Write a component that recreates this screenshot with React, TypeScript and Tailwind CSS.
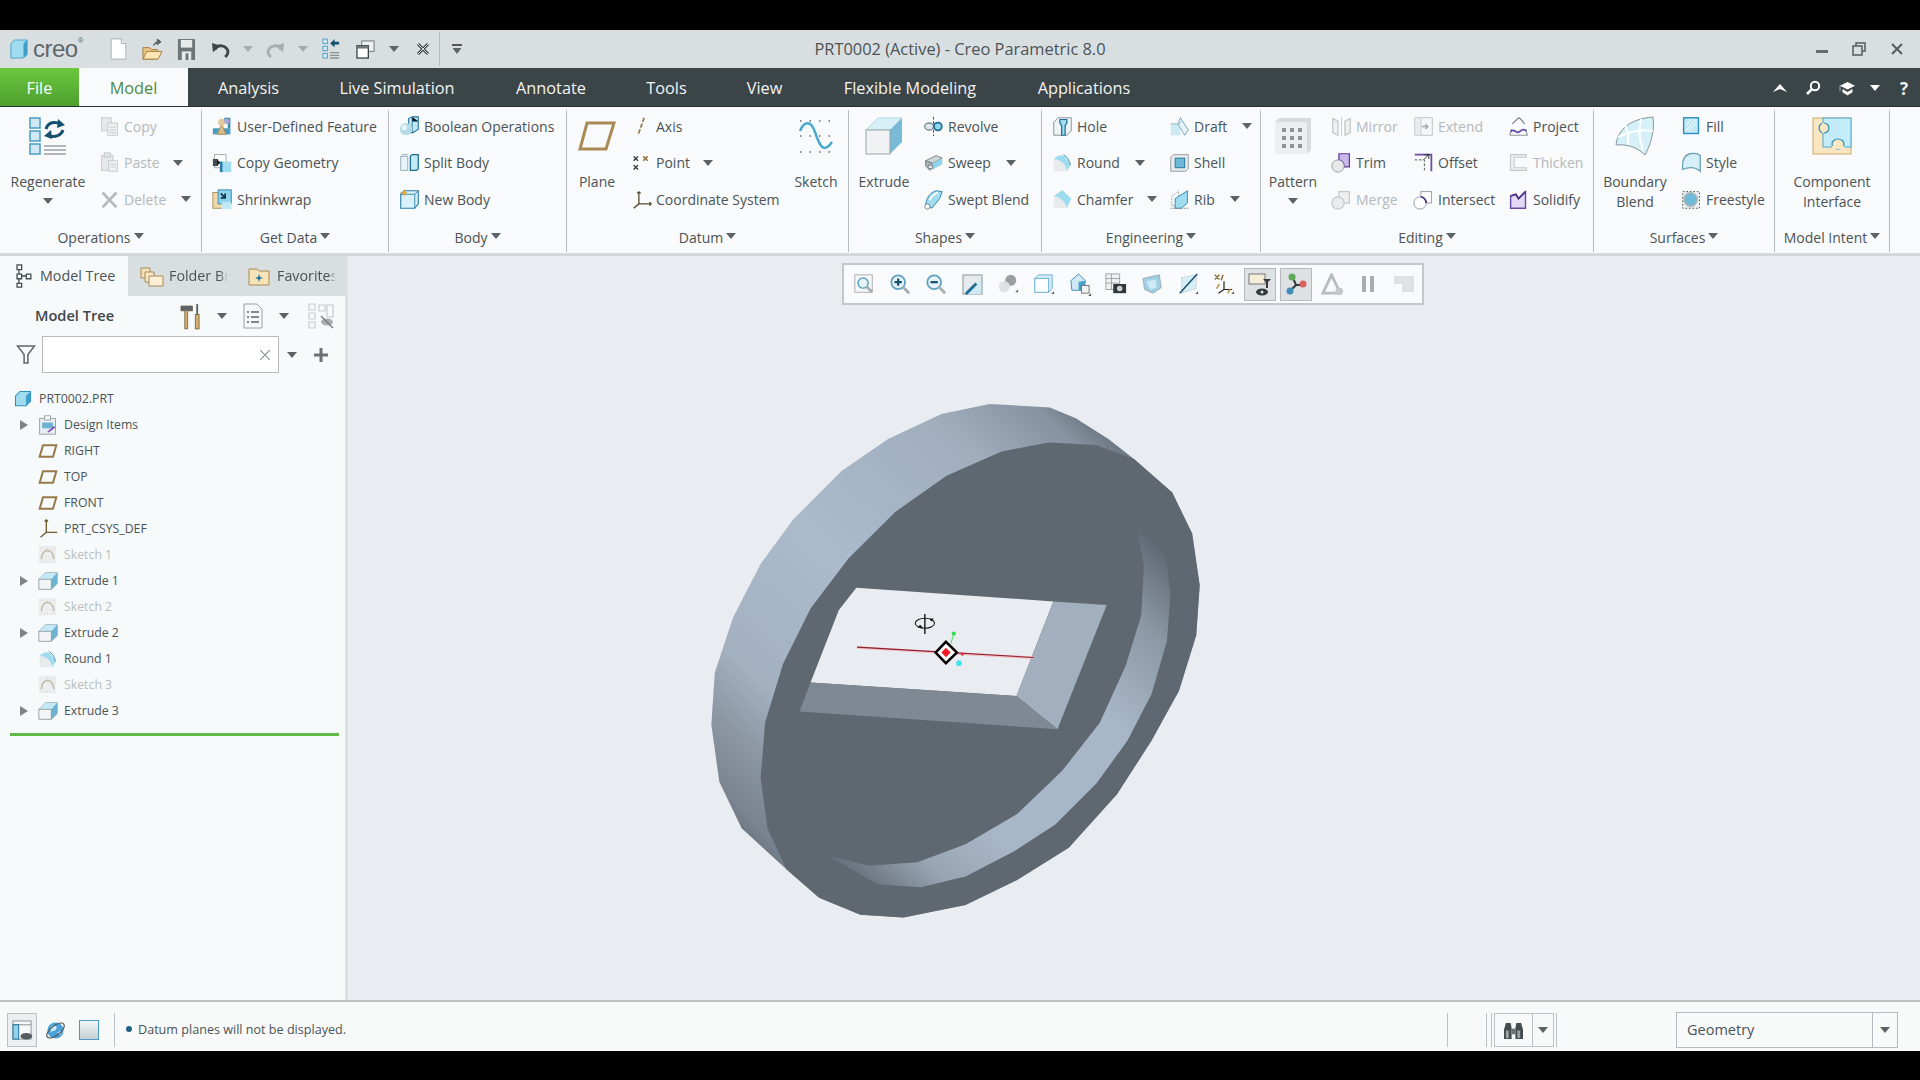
import type { ReactNode } from "react";

const BLUE = "#4a9cc4";
const PALE = "#cfeaf5";
const GOLD = "#97794a";
const OFF = "#c3c8ca";

const glyphs: Record<string, ReactNode> = {
  copy: (
    <>
      <rect x="3" y="2" width="11" height="15" fill="#e6e8e9" stroke={OFF} />
      <rect x="10" y="8" width="11" height="14" fill="#eef0f1" stroke={OFF} />
      <path d="M12 13h7M12 16h7M12 19h7" stroke={OFF} />
    </>
  ),
  paste: (
    <>
      <rect x="3" y="4" width="13" height="17" fill="#e6e8e9" stroke={OFF} />
      <rect x="6" y="1" width="7" height="5" fill="#dfe2e3" stroke={OFF} />
      <rect x="11" y="10" width="10" height="12" fill="#eef0f1" stroke={OFF} />
      <path d="M13 14h6M13 17h6" stroke={OFF} />
    </>
  ),
  del: <path d="M4 4l16 17M20 4L4 21" stroke="#b5babc" strokeWidth="3" />,
  udf: (
    <>
      <rect x="1" y="14" width="20" height="7" fill={BLUE} />
      <path d="M11 9l5 12H6z" fill="#d9b985" stroke="#a98a55" />
      <circle cx="11" cy="7" r="4" fill="#e2c79b" />
      <path d="M14 2h7v12h-3V5h-4z" fill="#3f8fb8" />
      <circle cx="17" cy="6" r="3" fill="#a9a6d8" />
    </>
  ),
  copygeo: (
    <>
      <rect x="3" y="3" width="13" height="15" fill="#fff" stroke="#9aa1a4" />
      <rect x="1" y="8" width="6" height="8" fill="#444b4f" />
      <rect x="9" y="11" width="13" height="12" fill="#9fdcf0" />
      <path d="M6 9l4 3-4 3z" fill="#111" />
      <path d="M9 11h3v12H9z" fill="#2b7fa8" />
    </>
  ),
  shrink: (
    <>
      <rect x="1" y="4" width="13" height="18" fill="#f0d9a8" stroke="#a98a55" />
      <rect x="7" y="1" width="15" height="16" fill="#8fd4ec" stroke="#2b7fa8" />
      <rect x="11" y="15" width="11" height="8" fill="#c3e9f6" />
      <path d="M10 5l5 5M15 5v5h-5" stroke="#17354a" strokeWidth="2" fill="none" />
    </>
  ),
  boolean: (
    <>
      <path d="M11 3l4-2h7v14l-6 4H11z" fill="#c3e6f3" stroke="#1f6f96" strokeWidth="1.2" />
      <path d="M15 1v5h7M15 6v13" stroke="#1f6f96" />
      <circle cx="8" cy="15" r="7" fill="#b5dbe9" />
      <circle cx="6" cy="13" r="3" fill="#e6f5fa" />
    </>
  ),
  split: (
    <>
      <path d="M2 5h8v16H2z" fill="#e7f5fa" stroke="#8fa5ae" />
      <path d="M2 5l2-2h6" fill="none" stroke="#8fa5ae" />
      <path d="M13 5l2-2h7v16l-2 2h-7z" fill="#c3e9f6" stroke="#1f6f96" strokeWidth="1.5" />
    </>
  ),
  newbody: (
    <>
      <path d="M2 6l4-4h16v15l-4 5H2z" fill="#d9f1f9" stroke="#2b7fa8" strokeWidth="1.3" />
      <path d="M2 6h16v16M18 6l4-4" fill="none" stroke="#2b7fa8" />
      <path d="M6 0l1 3 3 1-3 1-1 4-1-4-4-1 4-1z" fill="#e8a52c" />
    </>
  ),
  axis: <path d="M15 2L8 22" stroke={GOLD} strokeWidth="2" strokeDasharray="5 2" />,
  point: (
    <>
      <path d="M3 5l5 5M8 5l-5 5M3 15l5 5M8 15l-5 5" stroke="#333" strokeWidth="1.6" />
      <path d="M14 5l5 5M19 5l-5 5" stroke={GOLD} strokeWidth="2" />
    </>
  ),
  csys: (
    <path d="M9 3v14M9 17l-6 5M9 17h14M9 3l-2 2M9 3l2 2M21 15l2 2-2 2" stroke="#5b4a2b" strokeWidth="1.5" fill="none" />
  ),
  revolve: (
    <>
      <path d="M12 1v22" stroke="#333" strokeDasharray="3 2" />
      <ellipse cx="7" cy="12" rx="5" ry="4" fill="#dfe8ec" stroke="#7a8a91" strokeWidth="1.5" />
      <circle cx="17" cy="12" r="4.5" fill="#8fd4ec" stroke="#1f6f96" strokeWidth="2" />
    </>
  ),
  sweep: (
    <>
      <path d="M3 10l12-6 7 3-11 6z" fill="#cfd6d9" stroke="#6f7c82" />
      <path d="M3 10v6l5 5 3-8z" fill="#a9b4b9" stroke="#6f7c82" />
      <path d="M11 13l11-6v7l-11 6z" fill="#8fd4ec" />
      <path d="M6 15h5v4H6z" fill="#e2e7e9" stroke="#6f7c82" />
    </>
  ),
  swept: (
    <>
      <path d="M3 18c1-8 5-14 12-16l7 1-3 8-9 11z" fill="#9fdcf0" stroke="#2b7fa8" />
      <path d="M8 13c1-4 4-7 9-9" stroke="#fff" strokeWidth="2" fill="none" />
      <circle cx="5" cy="20" r="3" fill="#fff" stroke="#6f7c82" />
    </>
  ),
  hole: (
    <>
      <path d="M2 7l5-5h15v15l-5 5H2z" fill="#eef3f5" stroke="#7a8a91" />
      <path d="M9 4h8v4l-2 3v11H11V11L9 8z" fill="#9fdcf0" stroke="#1f6f96" strokeWidth="1.4" />
    </>
  ),
  round: (
    <>
      <path d="M2 8h11l8 7-4 7H2z" fill="#e7ebed" />
      <path d="M2 8c6-6 13-7 19 7l-4 7c-1-8-6-13-15-14z" fill="#9fdcf0" />
      <path d="M13 3c4 2 7 6 8 12" stroke="#2b7fa8" fill="none" />
    </>
  ),
  chamfer: (
    <>
      <path d="M2 8h9l7 9-1 5H2z" fill="#e7ebed" />
      <path d="M2 8l10-7 10 10-5 11c-1-6-7-13-15-14z" fill="#9fdcf0" />
    </>
  ),
  draft: (
    <>
      <path d="M2 9h11v13H2z" fill="#cde9f3" />
      <path d="M13 2l9 14-4 6-8-13z" fill="#e5f4fa" stroke="#6f9fb4" />
      <path d="M2 9h10l2-3" stroke="#8fb4c2" fill="none" />
    </>
  ),
  shell: (
    <>
      <path d="M2 6l3-3h17v16l-3 3H2z" fill="#e7ebed" stroke="#8a9599" />
      <rect x="7" y="7" width="11" height="11" fill="#6db9da" stroke="#1f6f96" />
    </>
  ),
  rib: (
    <>
      <path d="M3 9l8-7v17H3z" fill="none" stroke="#9aa1a4" strokeDasharray="2 1" />
      <path d="M7 11l14-9v14l-7 6H7z" fill="#9fdcf0" stroke="#2b7fa8" />
      <path d="M2 22h20" stroke="#7a8a91" strokeDasharray="2 1" />
    </>
  ),
  mirror: (
    <>
      <path d="M2 3l6 3v16l-6-3zM22 3l-6 3v16l6-3z" fill="#eef0f1" stroke={OFF} strokeWidth="1.5" />
      <path d="M12 1v22" stroke={OFF} />
    </>
  ),
  extend: (
    <>
      <rect x="2" y="2" width="20" height="20" fill="#e9ebec" stroke={OFF} />
      <rect x="9" y="2" width="13" height="20" fill="#f5f6f7" stroke={OFF} />
      <path d="M10 12h7M14 9l3 3-3 3" stroke="#a0a6a9" strokeWidth="1.5" fill="none" />
    </>
  ),
  project: (
    <>
      <path d="M2 22h20l-2-7M2 22l2-7" fill="none" stroke="#8a9599" strokeWidth="1.3" />
      <path d="M3 18c4-5 6 3 10 0s5-3 8-1" fill="none" stroke="#6a4aa8" strokeWidth="2" />
      <path d="M5 9l6-6c1-1 2-1 3 0l5 6" fill="none" stroke="#7d8a90" strokeWidth="1.6" />
    </>
  ),
  trim: (
    <>
      <path d="M9 2h12v15H15A8 8 0 0 0 9 9z" fill="#c9b8ec" stroke="#5a3d99" strokeWidth="1.4" />
      <circle cx="8" cy="16" r="7" fill="#e7e9ea" stroke="#8a9599" />
    </>
  ),
  offset: (
    <>
      <path d="M2 3h19v19" fill="none" stroke="#6a4aa8" strokeWidth="2" />
      <path d="M2 9h11v13" fill="none" stroke="#444" strokeDasharray="3 2" />
      <path d="M12 9l6-6M18 3v5M18 3h-5" stroke="#222" fill="none" />
    </>
  ),
  thicken: (
    <>
      <path d="M3 3h18v3H7v12h14v3H3z" fill="#f0f1f2" stroke={OFF} strokeWidth="1.2" />
    </>
  ),
  merge: (
    <>
      <rect x="9" y="3" width="12" height="13" fill="#eef0f1" stroke={OFF} strokeWidth="1.4" />
      <circle cx="8" cy="16" r="7" fill="#e9ebec" stroke={OFF} strokeWidth="1.4" />
    </>
  ),
  intersect: (
    <>
      <rect x="9" y="3" width="12" height="13" fill="#fff" stroke="#8a9599" />
      <circle cx="8" cy="16" r="7" fill="#fff" stroke="#8a9599" />
      <path d="M9 9a7 7 0 0 1 6 7" stroke="#4a2f85" strokeWidth="2" fill="none" />
    </>
  ),
  solidify: (
    <>
      <path d="M3 8l6-2 3 5 8-8v19H3z" fill="#e2daf4" stroke="#6a4aa8" strokeWidth="1.6" />
      <path d="M3 8l6-2 3 5 8-8" fill="none" stroke="#4a2f85" strokeWidth="2" />
    </>
  ),
  fill: (
    <>
      <rect x="3" y="2" width="17" height="18" fill="#bfe7f4" stroke="#2b8fc0" strokeWidth="1.6" />
      <path d="M5 17L17 4M8 18l10-11M5 12l7-8" stroke="#fff" />
    </>
  ),
  style: (
    <path d="M2 20c-1-9 1-16 8-18 5-1 10 0 12 2v18c-6-5-13-5-20-2z" fill="#d5f0f9" stroke="#6f9fb4" strokeWidth="1.5" />
  ),
  freestyle: (
    <>
      <rect x="2" y="3" width="19" height="19" fill="#eef3f5" stroke="#444" strokeDasharray="2 2" />
      <circle cx="11" cy="12" r="7.5" fill="#6dbcdc" stroke="#a9b4b9" strokeWidth="2" />
    </>
  ),
  cube: (
    <>
      <path d="M1 10l8-8h14v13l-7 7H1z" fill="#f2f4f5" stroke="#8a9599" />
      <path d="M9 2h14l-7 8H1z" fill="#c3e9f6" />
      <path d="M16 10l7-8v13l-7 7z" fill="#6db3d1" />
      <path d="M1 10h15v12" fill="none" stroke="#8a9599" />
    </>
  ),
  plane: <path d="M6 5h16l-4 14H2z" fill="none" stroke={GOLD} strokeWidth="2.4" />,
  csysTree: (
    <path d="M10 1v15M10 16l-7 6M10 16h13M8 3l2-2 2 2" stroke="#6f5a34" strokeWidth="1.6" fill="none" />
  ),
  sketchTree: (
    <>
      <rect x="1" y="1" width="21" height="21" fill="#eceeee" />
      <path d="M3 4h17M3 20h17" stroke="#c9cdcf" strokeDasharray="1 3" />
      <path d="M4 17c1-14 14-14 15 0" fill="none" stroke="#c0bca8" strokeWidth="2" />
    </>
  ),
  items: (
    <>
      <rect x="2" y="4" width="19" height="19" fill="#e8eef1" stroke="#8a9599" />
      <rect x="8" y="1" width="7" height="5" fill="#fff" stroke="#8a9599" />
      <rect x="5" y="9" width="13" height="7" fill="#6db3d1" />
      <path d="M11 20l8-7 2 2-8 6z" fill="#8a5bc4" />
    </>
  ),
  root: (
    <>
      <path d="M2 8l6-6h14v13l-6 6H2z" fill="#9fdcf0" stroke="#2b8fc0" strokeWidth="1.4" />
      <path d="M16 8l6-6v13l-6 6z" fill="#3f9fcb" />
    </>
  ),
};

function Ico({ name, size = 21 }: { name: string; size?: number }) {
  return (
    <svg viewBox="0 0 24 24" width={size} height={size} className="shrink-0">
      {glyphs[name]}
    </svg>
  );
}

function Caret({ className = "", dark = false }: { className?: string; dark?: boolean }) {
  return (
    <svg viewBox="0 0 10 6" width="10" height="6" className={"shrink-0 " + className}>
      <path d="M0 0h10L5 6z" fill={dark ? "#fff" : "#5c6366"} />
    </svg>
  );
}

function Small({
  icon,
  label,
  off = false,
  caret,
  slot = "w-[25px]",
}: {
  icon: string;
  label: string;
  off?: boolean;
  caret?: string;
  slot?: string;
}) {
  return (
    <div className={"flex h-[36.5px] items-center " + (off ? "text-[#b4b9bb]" : "text-[#4b5356]")}>
      <span className={"flex shrink-0 " + slot}>
        <Ico name={icon} />
      </span>
      <span className="whitespace-nowrap">{label}</span>
      {caret && <Caret className={caret} />}
    </div>
  );
}

function Col({ className = "", children }: { className?: string; children: ReactNode }) {
  return <div className={"-mt-[2px] flex shrink-0 flex-col " + className}>{children}</div>;
}

function Large({
  width,
  lines,
  caret = false,
  children,
}: {
  width: string;
  lines: string[];
  caret?: boolean;
  children: ReactNode;
}) {
  return (
    <div className={"flex shrink-0 flex-col items-center pt-[7px] leading-[20px] text-[#4b5356] " + width}>
      <div className="mb-[17px] flex h-[38px] items-center justify-center">{children}</div>
      {lines.map((l) => (
        <span key={l} className="whitespace-nowrap">
          {l}
        </span>
      ))}
      {caret && <Caret className="mt-[6px]" />}
    </div>
  );
}

function Group({ title, width, children }: { title: string; width: string; children: ReactNode }) {
  return (
    <section className={"flex h-[142px] shrink-0 flex-col border-r border-[#b5bdc0] " + width}>
      <div className="flex h-[115px]">{children}</div>
      <div className="flex h-[24px] items-center justify-center gap-[3px] text-[#4b5356]">
        <span>{title}</span>
        <Caret className="-mt-[2px]" />
      </div>
    </section>
  );
}

function RegenLarge() {
  return (
    <svg viewBox="0 0 38 38" width="38" height="38">
      {[1, 14, 27].map((y) => (
        <rect key={y} x="1" y={y} width="10" height="10" fill={PALE} stroke={BLUE} strokeWidth="1.5" />
      ))}
      <path d="M15 29h22M15 33h22M15 37h22" stroke="#9aa0a3" strokeWidth="1.6" />
      <path d="M17 12c2-7 9-8 15-5" fill="none" stroke="#14506e" strokeWidth="3" />
      <path d="M29 2l7 6-8 3z" fill="#14506e" />
      <path d="M34 13c-2 6-9 8-15 5" fill="none" stroke="#14506e" strokeWidth="3" />
      <path d="M22 13l-7 6 8 3z" fill="#14506e" />
    </svg>
  );
}

function ExtrudeLarge() {
  return (
    <svg viewBox="0 0 38 38" width="38" height="38">
      <path d="M1 13L13 1h24L25 13z" fill="#d7f0f8" stroke="#b5d4df" />
      <path d="M25 13L37 1v24L25 37z" fill="#79bad6" />
      <rect x="1" y="13" width="24" height="24" fill="#f1f2f3" stroke="#9aa1a4" />
    </svg>
  );
}

function SketchLarge() {
  return (
    <svg viewBox="0 0 36 38" width="36" height="38">
      <path d="M2 4h32M2 19h32M2 35h32" stroke="#667" strokeWidth="1.6" strokeDasharray="1.5 8" />
      <path d="M2 14C6 4 13 3 17 15s8 23 17 10" fill="none" stroke="#45a9d1" strokeWidth="2.4" />
    </svg>
  );
}

function PatternLarge() {
  return (
    <svg viewBox="0 0 38 38" width="38" height="38">
      <path d="M1 5l4-4h32v32l-4 4H1z" fill="#d8dbdd" />
      <rect x="1" y="5" width="32" height="32" fill="#eceeef" />
      {[11, 19, 27].map((y) =>
        [8, 16, 24].map((x) => <rect key={`${x}-${y}`} x={x} y={y} width="4" height="4" fill="#8f9598" />),
      )}
    </svg>
  );
}

function BlendLarge() {
  return (
    <svg viewBox="0 0 40 40" width="40" height="40">
      <path d="M1 29C3 13 15 3 38 1c2 12-2 27-8 38-8-8-18-11-29-10z" fill="#d5f0f9" stroke="#8a9599" />
      <path d="M10 9c3 6 4 12 3 20M26 3c-2 9-3 19 2 31M3 21c9-5 23-8 35-6" fill="none" stroke="#fff" strokeWidth="2" />
    </svg>
  );
}

function InterfaceLarge() {
  return (
    <svg viewBox="0 0 40 38" width="40" height="38">
      <rect x="1" y="1" width="38" height="36" fill="#fae6c0" stroke="#c9a96b" />
      <rect x="11" y="1" width="28" height="29" fill="#c3ecf8" stroke="#4fa8cf" />
      <circle cx="12" cy="11" r="5" fill="#fae6c0" stroke="#2b8fc0" strokeWidth="1.2" />
      <ellipse cx="26" cy="27" rx="6" ry="5" fill="#fae6c0" stroke="#2b8fc0" strokeWidth="1.2" />
      <path d="M10 6h2v10h-2zM20 29h12v3H20z" fill="#fae6c0" />
    </svg>
  );
}

function PlaneLarge() {
  return (
    <svg viewBox="0 0 38 30" width="38" height="30">
      <path d="M9 2h27l-8 26H2z" fill="none" stroke="#a98a55" strokeWidth="3" />
    </svg>
  );
}

const tabs = [
  { label: "Analysis", width: "w-[121px]" },
  { label: "Live Simulation", width: "w-[176px]" },
  { label: "Annotate", width: "w-[132px]" },
  { label: "Tools", width: "w-[99px]" },
  { label: "View", width: "w-[97px]" },
  { label: "Flexible Modeling", width: "w-[194px]" },
  { label: "Applications", width: "w-[154px]" },
];

const tree = [
  { icon: "items", label: "Design Items", open: true },
  { icon: "plane", label: "RIGHT" },
  { icon: "plane", label: "TOP" },
  { icon: "plane", label: "FRONT" },
  { icon: "csysTree", label: "PRT_CSYS_DEF" },
  { icon: "sketchTree", label: "Sketch 1", off: true },
  { icon: "cube", label: "Extrude 1", open: true },
  { icon: "sketchTree", label: "Sketch 2", off: true },
  { icon: "cube", label: "Extrude 2", open: true },
  { icon: "round", label: "Round 1" },
  { icon: "sketchTree", label: "Sketch 3", off: true },
  { icon: "cube", label: "Extrude 3", open: true },
];

function TitleBar() {
  return (
    <header className="relative flex h-[38px] shrink-0 items-center bg-[#d9dfe1]">
      <svg viewBox="0 0 20 22" width="18" height="20" className="ml-[10px]">
        <path d="M1 5l4-4h14v16l-4 4H1z" fill="#9fdcf0" stroke="#3f9fcb" />
        <path d="M15 5l4-4v16l-4 4z" fill="#3f9fcb" />
      </svg>
      <span className="ml-[5px] w-[58px] font-['Liberation_Sans',sans-serif] text-[24px] leading-none tracking-[-0.5px] text-[#5f6669]">
        creo<span className="align-top text-[8px]">®</span>
      </span>
      <div className="ml-[19px] flex items-center">
        <svg viewBox="0 0 18 24" width="17" height="22">
          <path d="M1 1h11l5 5v17H1z" fill="#fff" stroke="#a6acaf" />
          <path d="M12 1v5h5" fill="#e8eaeb" stroke="#a6acaf" />
        </svg>
        <svg viewBox="0 0 22 22" width="21" height="21" className="ml-[15px]">
          <path d="M1 9h7l2 2h6v10H1z" fill="#e6c283" stroke="#a87f3c" />
          <path d="M5 13h16l-4 8H1z" fill="#fbe6b4" stroke="#a87f3c" />
          <path d="M12 7c1-3 3-4 6-4M16 0l4 3-4 3z" fill="#55605f" stroke="#55605f" />
        </svg>
        <svg viewBox="0 0 20 24" width="19" height="23" className="ml-[14px]">
          <path d="M1 1h18v22H1z" fill="#6c7578" />
          <rect x="4" y="2" width="12" height="8" fill="#e7eaeb" />
          <rect x="5" y="14" width="10" height="9" fill="#e7eaeb" />
          <rect x="9" y="16" width="3" height="7" fill="#6c7578" />
        </svg>
        <svg viewBox="0 0 20 18" width="19" height="17" className="ml-[15px]">
          <path d="M4 9c3-6 12-5 14 2 0 2-1 4-3 6" fill="none" stroke="#3e4648" strokeWidth="3" />
          <path d="M1 2l9 3-8 7z" fill="#3e4648" />
        </svg>
        <Caret className="ml-[13px] opacity-40" />
        <svg viewBox="0 0 20 18" width="19" height="17" className="ml-[13px]">
          <path d="M16 9C13 3 4 4 2 11c0 2 1 4 3 6" fill="none" stroke="#a7adb0" strokeWidth="3" />
          <path d="M19 2l-9 3 8 7z" fill="#a7adb0" />
        </svg>
        <Caret className="ml-[13px] opacity-40" />
        <svg viewBox="0 0 20 24" width="18" height="22" className="ml-[14px]">
          {[1, 9, 17].map((y) => (
            <rect key={y} x="1" y={y} width="5" height="5" fill={PALE} stroke={BLUE} />
          ))}
          <path d="M9 16h10M9 19h10M9 22h10" stroke="#8a9194" strokeWidth="1.4" />
          <path d="M9 6l5-5v3h5v3h-5v3z" fill="#14506e" />
        </svg>
        <svg viewBox="0 0 20 20" width="19" height="19" className="ml-[16px]">
          <rect x="6" y="1" width="13" height="11" fill="#eef0f1" stroke="#6f7679" />
          <rect x="1" y="6" width="12" height="13" fill="#fff" stroke="#3e4648" strokeWidth="1.4" />
          <rect x="1" y="6" width="12" height="3" fill="#6f7679" />
        </svg>
        <Caret className="ml-[14px]" />
        <svg viewBox="0 0 16 16" width="16" height="16" className="ml-[16px]">
          <path d="M3 3l10 10M13 3L3 13" stroke="#3e4648" strokeWidth="3" />
          <path d="M3 3l10 10M13 3L3 13" stroke="#d9dfe1" strokeWidth="1" />
        </svg>
        <span className="ml-[8px] h-[34px] w-px bg-[#b5bcbf]" />
        <span className="ml-[12px] flex flex-col items-center gap-[2px]">
          <span className="h-[2px] w-[10px] bg-[#555]" />
          <Caret className="scale-x-90" />
        </span>
      </div>
      <h1 className="absolute left-0 right-0 text-center text-[16.4px] font-normal leading-none text-[#4b5356]">
        PRT0002 (Active) - Creo Parametric 8.0
      </h1>
      <div className="ml-auto mr-[16px] flex items-center gap-[24px]">
        <span className="mt-[5px] h-[2.5px] w-[12px] bg-[#666c6f]" />
        <svg viewBox="0 0 14 14" width="14" height="14">
          <rect x="1" y="4" width="9" height="9" fill="none" stroke="#555b5e" strokeWidth="1.5" />
          <path d="M4 4V1h9v8h-3" fill="none" stroke="#555b5e" strokeWidth="1.5" />
        </svg>
        <svg viewBox="0 0 14 14" width="14" height="14">
          <path d="M2 2l10 10M12 2L2 12" stroke="#555b5e" strokeWidth="2" />
        </svg>
      </div>
    </header>
  );
}

function TabBar() {
  return (
    <nav className="flex h-[39px] shrink-0 items-stretch border-b border-[#2a3133] bg-[#3b4447] pt-[2px] text-[16.3px] text-[#f2f4f4]">
      <div className="-mt-[2px] flex w-[79px] items-center justify-center bg-gradient-to-b from-[#6cc83f] to-[#4d9f2e] pt-[2px] text-white">
        File
      </div>
      <div className="-mt-[2px] flex w-[109px] items-center justify-center bg-[#f8fafb] pt-[2px] text-[#4f8a42]">
        Model
      </div>
      {tabs.map((t) => (
        <div key={t.label} className={"flex items-center justify-center whitespace-nowrap " + t.width}>
          {t.label}
        </div>
      ))}
      <div className="ml-auto mr-[12px] flex items-center">
        <svg viewBox="0 0 14 9" width="14" height="9">
          <path d="M7 0l7 8-7-3-7 3z" fill="#fff" />
        </svg>
        <svg viewBox="0 0 16 16" width="16" height="16" className="ml-[18px]">
          <circle cx="10" cy="6" r="4.2" fill="none" stroke="#fff" strokeWidth="2" />
          <path d="M7 9l-5 5" stroke="#fff" strokeWidth="2.5" />
        </svg>
        <svg viewBox="0 0 18 16" width="17" height="15" className="ml-[18px]">
          <path d="M9 1l8 4-8 4-8-4z" fill="#fff" />
          <path d="M4 9l5 3 5-3v3l-5 3-5-3zM1 5v6" fill="#fff" stroke="#fff" strokeWidth="0.6" />
        </svg>
        <Caret dark className="ml-[14px]" />
        <span className="ml-[20px] text-[17px] font-bold leading-none">?</span>
      </div>
    </nav>
  );
}

function Ribbon() {
  return (
    <div className="flex h-[146px] shrink-0 bg-[#f8fafb] pt-[3px] text-[14px]">
      <Group title="Operations" width="w-[202px]">
        <Large width="w-[96px]" lines={["Regenerate"]} caret>
          <RegenLarge />
        </Large>
        <Col className="ml-[3px]">
          <Small icon="copy" label="Copy" off />
          <Small icon="paste" label="Paste" off caret="ml-[13px]" />
          <Small icon="del" label="Delete" off caret="ml-[15px]" />
        </Col>
      </Group>
      <Group title="Get Data" width="w-[187px]">
        <Col className="ml-[10px]">
          <Small icon="udf" label="User-Defined Feature" />
          <Small icon="copygeo" label="Copy Geometry" />
          <Small icon="shrink" label="Shrinkwrap" />
        </Col>
      </Group>
      <Group title="Body" width="w-[178px]">
        <Col className="ml-[10px]">
          <Small icon="boolean" label="Boolean Operations" />
          <Small icon="split" label="Split Body" />
          <Small icon="newbody" label="New Body" />
        </Col>
      </Group>
      <Group title="Datum" width="w-[282px]">
        <Large width="w-[60px]" lines={["Plane"]}>
          <PlaneLarge />
        </Large>
        <Col className="ml-[4px] w-[155px]">
          <Small icon="axis" label="Axis" />
          <Small icon="point" label="Point" caret="ml-[13px]" />
          <Small icon="csys" label="Coordinate System" />
        </Col>
        <Large width="w-[60px]" lines={["Sketch"]}>
          <SketchLarge />
        </Large>
      </Group>
      <Group title="Shapes" width="w-[193px]">
        <Large width="w-[70px]" lines={["Extrude"]}>
          <ExtrudeLarge />
        </Large>
        <Col className="ml-[4px]">
          <Small icon="revolve" label="Revolve" />
          <Small icon="sweep" label="Sweep" caret="ml-[15px]" />
          <Small icon="swept" label="Swept Blend" />
        </Col>
      </Group>
      <Group title="Engineering" width="w-[219px]">
        <Col className="ml-[10px] w-[117px]">
          <Small icon="hole" label="Hole" />
          <Small icon="round" label="Round" caret="ml-[15px]" />
          <Small icon="chamfer" label="Chamfer" caret="ml-[14px]" />
        </Col>
        <Col>
          <Small icon="draft" label="Draft" caret="ml-[15px]" />
          <Small icon="shell" label="Shell" />
          <Small icon="rib" label="Rib" caret="ml-[15px]" />
        </Col>
      </Group>
      <Group title="Editing" width="w-[333px]">
        <Large width="w-[64px]" lines={["Pattern"]} caret>
          <PatternLarge />
        </Large>
        <Col className="ml-[6px] w-[82px]">
          <Small icon="mirror" label="Mirror" off />
          <Small icon="trim" label="Trim" />
          <Small icon="merge" label="Merge" off />
        </Col>
        <Col className="w-[95px]">
          <Small icon="extend" label="Extend" off />
          <Small icon="offset" label="Offset" />
          <Small icon="intersect" label="Intersect" />
        </Col>
        <Col>
          <Small icon="project" label="Project" />
          <Small icon="thicken" label="Thicken" off />
          <Small icon="solidify" label="Solidify" />
        </Col>
      </Group>
      <Group title="Surfaces" width="w-[181px]">
        <Large width="w-[82px]" lines={["Boundary", "Blend"]}>
          <BlendLarge />
        </Large>
        <Col className="ml-[5px]">
          <Small icon="fill" label="Fill" />
          <Small icon="style" label="Style" />
          <Small icon="freestyle" label="Freestyle" />
        </Col>
      </Group>
      <Group title="Model Intent" width="w-[115px]">
        <Large width="w-[114px]" lines={["Component", "Interface"]}>
          <InterfaceLarge />
        </Large>
      </Group>
    </div>
  );
}

function ModelTree() {
  return (
    <aside className="flex w-[348px] shrink-0 border-r-[3px] border-[#dcdfe3] bg-[#f7fafb] text-[#4b5356]">
      <div className="flex w-full flex-col">
        <div className="flex h-[40px] shrink-0 text-[14.3px]">
          <div className="flex w-[128px] items-center pl-[15px]">
            <svg viewBox="0 0 18 26" width="17" height="24">
              <path d="M2 1h5v5H2zM2 11h5v5H2zM2 21h5v4H2zM12 11h5v5h-5zM7 13h5M4 6v5M4 16v5" fill="none" stroke="#444b4e" strokeWidth="1.4" />
            </svg>
            <span className="ml-[8px]">Model Tree</span>
          </div>
          <div className="flex flex-1 items-center bg-[#d9dfe1]">
            <svg viewBox="0 0 24 22" width="24" height="22" className="ml-[12px]">
              <path d="M1 3h9v10H1z" fill="#f3e0b6" stroke="#a98a55" />
              <path d="M5 7h9v10H5z" fill="#f6e6c3" stroke="#a98a55" />
              <path d="M9 11h14v10H9z" fill="#fbefd4" stroke="#a98a55" />
            </svg>
            <span className="ml-[5px] w-[59px] overflow-hidden whitespace-nowrap [mask-image:linear-gradient(to_right,black_85%,transparent)]">
              Folder Browser
            </span>
            <svg viewBox="0 0 22 20" width="22" height="20" className="ml-[20px]">
              <path d="M1 3h8l2 2h10v14H1z" fill="#f6e3b8" stroke="#a98a55" />
              <path d="M11 8l1 3 3 1-3 1-1 3-1-3-3-1 3-1z" fill="#1f6f96" />
            </svg>
            <span className="ml-[7px] w-[59px] overflow-hidden whitespace-nowrap [mask-image:linear-gradient(to_right,black_88%,transparent)]">
              Favorites
            </span>
          </div>
        </div>
        <div className="flex h-[40px] shrink-0 items-center pl-[35px]">
          <span className="w-[145px] text-[14.6px] font-semibold text-[#3f4649]">Model Tree</span>
          <svg viewBox="0 0 22 28" width="21" height="27">
            <path d="M1 3h12v5H8v19H5V8H1z" fill="#d8b06a" stroke="#6a5a3a" strokeWidth="0.8" />
            <path d="M1 3h12v5H1z" fill="#5c6366" />
            <rect x="16" y="12" width="4" height="15" fill="#d8b06a" stroke="#6a5a3a" strokeWidth="0.8" />
            <path d="M18 1v11" stroke="#5c6366" strokeWidth="2" />
          </svg>
          <Caret className="ml-[16px]" />
          <svg viewBox="0 0 20 26" width="20" height="26" className="ml-[16px]">
            <path d="M1 1h13l5 5v19H1z" fill="#f5f7f8" stroke="#9aa1a4" />
            <path d="M4 9h2M8 9h8M4 14h2M8 14h8M4 19h2M8 19h8" stroke="#5c6366" strokeWidth="1.4" />
          </svg>
          <Caret className="ml-[16px]" />
          <svg viewBox="0 0 26 26" width="26" height="26" className="ml-[19px]">
            <path d="M1 1h6v6H1zM1 10h6v6H1zM1 19h6v6H1zM11 2h6v6h-6zM19 2h6v12h-6z" fill="none" stroke="#c8cccf" strokeWidth="1.2" />
            <ellipse cx="19" cy="19" rx="6" ry="3.5" fill="#a8aeb1" />
            <path d="M13 13l12 12" stroke="#7a8083" strokeWidth="1.5" />
          </svg>
        </div>
        <div className="flex h-[37px] shrink-0 items-center pl-[16px]">
          <svg viewBox="0 0 20 20" width="20" height="19">
            <path d="M1 1h18l-7 9v9h-4v-9z" fill="none" stroke="#5f6669" strokeWidth="1.6" />
          </svg>
          <div className="ml-[6px] flex h-[37px] w-[237px] items-center justify-end border border-[#b4babd] bg-white pr-[8px]">
            <svg viewBox="0 0 10 10" width="10" height="10">
              <path d="M0 0l10 10M10 0L0 10" stroke="#8d9396" strokeWidth="1.2" />
            </svg>
          </div>
          <Caret className="ml-[8px]" />
          <svg viewBox="0 0 14 14" width="14" height="14" className="ml-[17px]">
            <path d="M7 0v14M0 7h14" stroke="#6a7073" strokeWidth="3" />
          </svg>
        </div>
        <div className="mt-[13px] flex h-[26px] shrink-0 items-center pl-[14px] text-[12.3px]">
          <Ico name="root" size={18} />
          <span className="ml-[7px]">PRT0002.PRT</span>
        </div>
        {tree.map((row) => (
          <div key={row.label} className={"flex h-[26px] shrink-0 items-center text-[12.3px] " + (row.off ? "text-[#b9bdbf]" : "")}>
            <span className="flex w-[38px] justify-end pr-[10px]">
              {row.open && (
                <svg viewBox="0 0 8 10" width="8" height="10">
                  <path d="M0 0l8 5-8 5z" fill="#7d8386" />
                </svg>
              )}
            </span>
            <Ico name={row.icon} size={20} />
            <span className="ml-[6px] whitespace-nowrap">{row.label}</span>
          </div>
        ))}
        <div className="ml-[10px] mt-[9px] h-[3px] w-[329px] bg-[#62b947]" />
      </div>
    </aside>
  );
}

function ViewTool({ active = false, children }: { active?: boolean; children: ReactNode }) {
  return (
    <span
      className={
        "flex h-[33px] shrink-0 items-center justify-center " +
        (active ? "mx-[2px] w-[32px] border border-[#b4babd] bg-[#dde1e4]" : "w-[36px]")
      }
    >
      {children}
    </span>
  );
}

function ViewBar() {
  const lens = (sign: string) => (
    <svg viewBox="0 0 24 24" width="22" height="22">
      <circle cx="10" cy="10" r="7.5" fill="#e7f4f9" stroke="#5fa3c3" strokeWidth="2" />
      <path d="M15 15l7 7" stroke="#a6adb0" strokeWidth="3" />
      <path d={sign} stroke="#14506e" strokeWidth="2.4" />
    </svg>
  );
  return (
    <div className="mt-[6px] flex h-[42px] w-[582px] items-center border-2 border-[#c2c7c9] bg-[#f8fafb] pl-[2px]">
      <ViewTool>
        <svg viewBox="0 0 24 24" width="22" height="22">
          <rect x="2" y="2" width="19" height="19" fill="#f5f7f8" stroke="#a6adb0" />
          <circle cx="11" cy="11" r="5.5" fill="#e7f4f9" stroke="#5fa3c3" strokeWidth="1.6" />
          <path d="M15 15l6 6" stroke="#a6adb0" strokeWidth="3" />
        </svg>
      </ViewTool>
      <ViewTool>{lens("M6 10h8M10 6v8")}</ViewTool>
      <ViewTool>{lens("M6 10h8")}</ViewTool>
      <ViewTool>
        <svg viewBox="0 0 22 22" width="21" height="21">
          <rect x="1" y="1" width="20" height="20" fill="#e3e9ec" stroke="#8a9599" />
          <path d="M3 21L20 5v16z" fill="#cfeaf5" />
          <path d="M4 21L15 10" stroke="#1f6f96" strokeWidth="3" />
        </svg>
      </ViewTool>
      <ViewTool>
        <svg viewBox="0 0 24 24" width="22" height="22">
          <circle cx="15" cy="8" r="6" fill="#9a9fa2" />
          <circle cx="8" cy="15" r="6" fill="#dfe2e3" />
          <path d="M20 21l3-3v3z" fill="#555" />
        </svg>
      </ViewTool>
      <ViewTool>
        <svg viewBox="0 0 24 24" width="22" height="22">
          <path d="M2 6l4-4h15v15l-4 4H2z" fill="#cfeaf5" stroke="#6db3d1" />
          <rect x="2" y="6" width="15" height="15" fill="#fff" stroke="#6db3d1" />
          <path d="M20 23l3-3v3z" fill="#555" />
        </svg>
      </ViewTool>
      <ViewTool>
        <svg viewBox="0 0 24 24" width="23" height="23">
          <path d="M2 8l8-7 7 7-1 10H3z" fill="#cfeaf5" stroke="#3f8fb8" />
          <path d="M10 1v8l7-1-1 10h-6z" fill="#4aa0c9" />
          <rect x="13" y="13" width="8" height="8" fill="#f0f1f2" stroke="#777" />
          <path d="M20 24l3-3v3z" fill="#555" />
        </svg>
      </ViewTool>
      <ViewTool>
        <svg viewBox="0 0 24 24" width="22" height="22">
          <rect x="1" y="1" width="15" height="17" fill="#f1f2f3" stroke="#9aa1a4" />
          <path d="M1 6h15M1 11h15M7 1v17" stroke="#9aa1a4" />
          <rect x="9" y="12" width="14" height="10" fill="#30383b" />
          <circle cx="16" cy="17" r="3" fill="#cdd3d5" />
        </svg>
      </ViewTool>
      <ViewTool>
        <svg viewBox="0 0 24 24" width="22" height="22">
          <path d="M2 6l18-4 2 14-9 6-9-4z" fill="#9fd0e6" stroke="#9aa9b0" />
          <path d="M6 9l10-2 1 9-7 2z" fill="#cfeaf5" />
        </svg>
      </ViewTool>
      <ViewTool>
        <svg viewBox="0 0 24 24" width="22" height="22">
          <path d="M5 5l16-3v15l-16 5z" fill="#d7edf5" stroke="#c3cdd2" strokeDasharray="2 1" />
          <path d="M3 22L22 1" stroke="#14506e" strokeWidth="1.6" />
          <path d="M20 23l3-3v3z" fill="#555" />
        </svg>
      </ViewTool>
      <ViewTool>
        <svg viewBox="0 0 24 24" width="22" height="22">
          <path d="M2 2l5 5M7 2L2 7M11 2l-2 6" stroke="#8a6d3b" strokeWidth="1.6" />
          <path d="M12 9v9M12 18l-6 4M12 18h9" stroke="#222" strokeWidth="1.3" />
          <path d="M7 12l-3 5M16 22l3-5" stroke="#b59350" strokeWidth="1.6" />
          <path d="M20 23l3-3v3z" fill="#555" />
        </svg>
      </ViewTool>
      <ViewTool active>
        <svg viewBox="0 0 26 26" width="26" height="26">
          <rect x="2" y="3" width="16" height="10" fill="#f7eed9" stroke="#777" />
          <path d="M16 8h8l-3 3v6h-2v-6z" fill="#333b3e" />
          <ellipse cx="15" cy="21" rx="6" ry="3.5" fill="#333b3e" />
          <circle cx="15" cy="21" r="1.5" fill="#dde1e4" />
        </svg>
      </ViewTool>
      <ViewTool active>
        <svg viewBox="0 0 24 24" width="24" height="24">
          <path d="M9 6l3 7 8 0M12 13l-6 6" stroke="#30383b" strokeWidth="2" fill="none" />
          <circle cx="8" cy="5" r="3.5" fill="#62a95c" />
          <circle cx="19" cy="12" r="3.5" fill="#d9605b" />
          <circle cx="6" cy="19" r="3.5" fill="#3f8fb8" />
        </svg>
      </ViewTool>
      <ViewTool>
        <svg viewBox="0 0 24 24" width="23" height="23">
          <path d="M11 2L2 21h18z" fill="none" stroke="#b8bdbf" strokeWidth="3" />
          <circle cx="19" cy="19" r="4" fill="#c3c8ca" />
        </svg>
      </ViewTool>
      <ViewTool>
        <span className="h-[16px] w-[12px] border-x-[4px] border-[#a9aeb1]" />
      </ViewTool>
      <ViewTool>
        <svg viewBox="0 0 22 18" width="22" height="18">
          <path d="M1 1h20v16H9v-8H1z" fill="#dfe2e3" />
        </svg>
      </ViewTool>
    </div>
  );
}

function Part() {
  return (
    <svg
      viewBox="0 0 1568 1568"
      preserveAspectRatio="none"
      className="absolute left-[342px] top-[124px] h-[560px] w-[540px]"
    >
      <defs>
        <linearGradient id="wall" gradientUnits="userSpaceOnUse" x1="1290" y1="200" x2="200" y2="1400">
          <stop offset="0" stopColor="#66717d" />
          <stop offset="0.06" stopColor="#86929f" />
          <stop offset="0.2" stopColor="#a0aebe" />
          <stop offset="0.5" stopColor="#abbbcc" />
          <stop offset="0.74" stopColor="#a3b1c1" />
          <stop offset="0.84" stopColor="#8c97a3" />
          <stop offset="0.93" stopColor="#7a8490" />
          <stop offset="1" stopColor="#5f6771" />
        </linearGradient>
        <linearGradient id="recess" gradientUnits="userSpaceOnUse" x1="1300" y1="400" x2="420" y2="1380">
          <stop offset="0" stopColor="#5f6771" />
          <stop offset="0.15" stopColor="#8b98a4" />
          <stop offset="0.35" stopColor="#a8b7c8" />
          <stop offset="0.7" stopColor="#a8b7c8" />
          <stop offset="0.85" stopColor="#97a4b2" />
          <stop offset="1" stopColor="#5f6771" />
        </linearGradient>
      </defs>
      <polygon
        fill="url(#wall)"
        points="870,67 1045,77 1120,107 1215,165 1290,222 1400,315 1458,430 1480,575 1470,715 1420,870 1340,1010 1240,1160 1100,1310 950,1400 800,1470 620,1505 495,1497 375,1450 280,1370 150,1255 85,1125 62,965 72,820 125,665 205,515 300,390 440,255 575,165 730,95"
      />
      <polygon
        fill="#5f6771"
        points="1040,175 1180,182 1290,222 1400,315 1458,430 1480,575 1470,715 1420,870 1340,1010 1240,1160 1100,1310 950,1400 800,1470 620,1505 495,1497 375,1450 280,1370 225,1255 205,1115 218,960 270,795 350,640 460,500 595,370 745,268 905,200"
      />
      <polygon
        fill="url(#recess)"
        points="1245,315 1290,380 1318,520 1310,660 1265,800 1190,960 1080,1095 950,1215 800,1300 660,1350 520,1360 400,1332 545,1412 670,1420 800,1390 940,1320 1060,1245 1180,1130 1270,1010 1340,880 1385,730 1395,600 1380,480 1335,395"
      />
      <polygon fill="#e9ecf0" points="483,582 1055,620 948,885 350,847 432,645" />
      <polygon fill="#a2afbe" points="1055,620 1210,630 1067,978 948,885" />
      <polygon fill="#7e8994" points="350,847 948,885 1067,978 318,928" />
      <path d="M485 749L998 778" stroke="#f2b9bf" strokeWidth="7" />
      <path d="M485 748L998 777" stroke="#8a1c2a" strokeWidth="3" />
      <path d="M757 738L766 710" stroke="#58e05a" strokeWidth="3" />
      <circle cx="766" cy="710" r="6" fill="#2fe04a" />
      <circle cx="781" cy="793" r="8" fill="#3fe3f0" />
      <circle cx="791" cy="767" r="5" fill="#d83a45" />
      <path d="M743 733L775 763 743 793 713 763z" fill="#fff" stroke="#000" strokeWidth="7" />
      <path d="M743 750L757 763 743 776 730 763z" fill="#ef1b24" />
      <ellipse cx="682" cy="681" rx="28" ry="14" fill="none" stroke="#111" strokeWidth="3" />
      <path d="M682 655v56" stroke="#111" strokeWidth="4" />
      <path d="M662 693l14 0-8-8zM696 668l12 0-8 8z" fill="#111" />
    </svg>
  );
}

function StatusBar() {
  return (
    <footer className="flex h-[51px] shrink-0 items-center border-t-2 border-[#bcc3c6] bg-[#f8fafa] pt-[7px] text-[#4b5356]">
      <div className="ml-[7px] flex h-[34px] w-[30px] items-center justify-center border border-[#bbc0c2] bg-[#eceef0]">
        <svg viewBox="0 0 22 22" width="21" height="21">
          <rect x="1" y="1" width="19" height="19" fill="#f6f7f8" stroke="#8a9194" />
          <path d="M1 5h19" stroke="#8a9194" />
          <rect x="1" y="5" width="6" height="15" fill="#8fd4ec" stroke="#1f6f96" />
          <ellipse cx="15" cy="17" rx="6" ry="3.5" fill="#555b5e" />
        </svg>
      </div>
      <svg viewBox="0 0 22 22" width="21" height="21" className="ml-[8px]">
        <circle cx="11" cy="11" r="8.5" fill="#4aa3da" />
        <path d="M6 7c3-2 7-2 6 2s-5 1-6 5M13 13l4-2-1 5z" fill="#cfe8f4" />
        <ellipse cx="11" cy="11" rx="11" ry="5" fill="none" stroke="#555b5e" strokeWidth="1.2" transform="rotate(-38 11 11)" />
      </svg>
      <span className="ml-[13px] h-[20px] w-[20px] border border-[#4a9cc4] bg-gradient-to-b from-[#f4f7f8] to-[#c4ced4]" />
      <span className="ml-[15px] h-[34px] w-px bg-[#bcc3c6]" />
      <span className="ml-[11px] -mt-[2px] h-[6px] w-[6px] rounded-full bg-[#1f6284]" />
      <span className="ml-[6px] w-[207px] whitespace-nowrap text-[12.6px]">Datum planes will not be displayed.</span>
      <span className="ml-[1102px] h-[34px] w-px bg-[#bcc3c6]" />
      <span className="ml-[38px] h-[34px] w-px bg-[#bcc3c6]" />
      <span className="ml-[4px] h-[34px] w-px bg-[#bcc3c6]" />
      <div className="ml-[2px] flex h-[34px] w-[60px] border border-[#bcc3c6]">
        <span className="flex w-[38px] items-center justify-center border-r border-[#bcc3c6]">
          <svg viewBox="0 0 22 20" width="21" height="19">
            <path d="M3 2h5l1 5v12H1V9zM14 2h5l2 7v10h-8V7z" fill="#444b4e" />
            <path d="M9 8h4v6H9z" fill="#6b7174" />
            <path d="M3 10h3v8H3zM15 10h3v8h-3z" fill="#9ba1a4" />
          </svg>
        </span>
        <span className="flex flex-1 items-center justify-center">
          <Caret />
        </span>
      </div>
      <span className="ml-[2px] h-[34px] w-px bg-[#bcc3c6]" />
      <div className="ml-[119px] flex h-[36px] w-[222px] border border-[#b4babd] text-[14.5px]">
        <span className="flex flex-1 items-center pl-[10px]">Geometry</span>
        <span className="flex w-[25px] items-center justify-center border-l border-[#b4babd]">
          <Caret />
        </span>
      </div>
    </footer>
  );
}

export default function App() {
  return (
    <div className="flex h-[1080px] w-[1920px] flex-col overflow-hidden bg-black pb-[29px] pt-[30px] font-['Open_Sans',sans-serif]">
      <TitleBar />
      <TabBar />
      <Ribbon />
      <div className="h-[3px] shrink-0 bg-[#d3d8da]" />
      <main className="flex min-h-0 flex-1">
        <ModelTree />
        <div className="relative flex flex-1 flex-col items-center bg-[#e9ecf0]">
          <div className="mt-[1px] -ml-[2px]">
            <ViewBar />
          </div>
          <Part />
        </div>
      </main>
      <StatusBar />
    </div>
  );
}
